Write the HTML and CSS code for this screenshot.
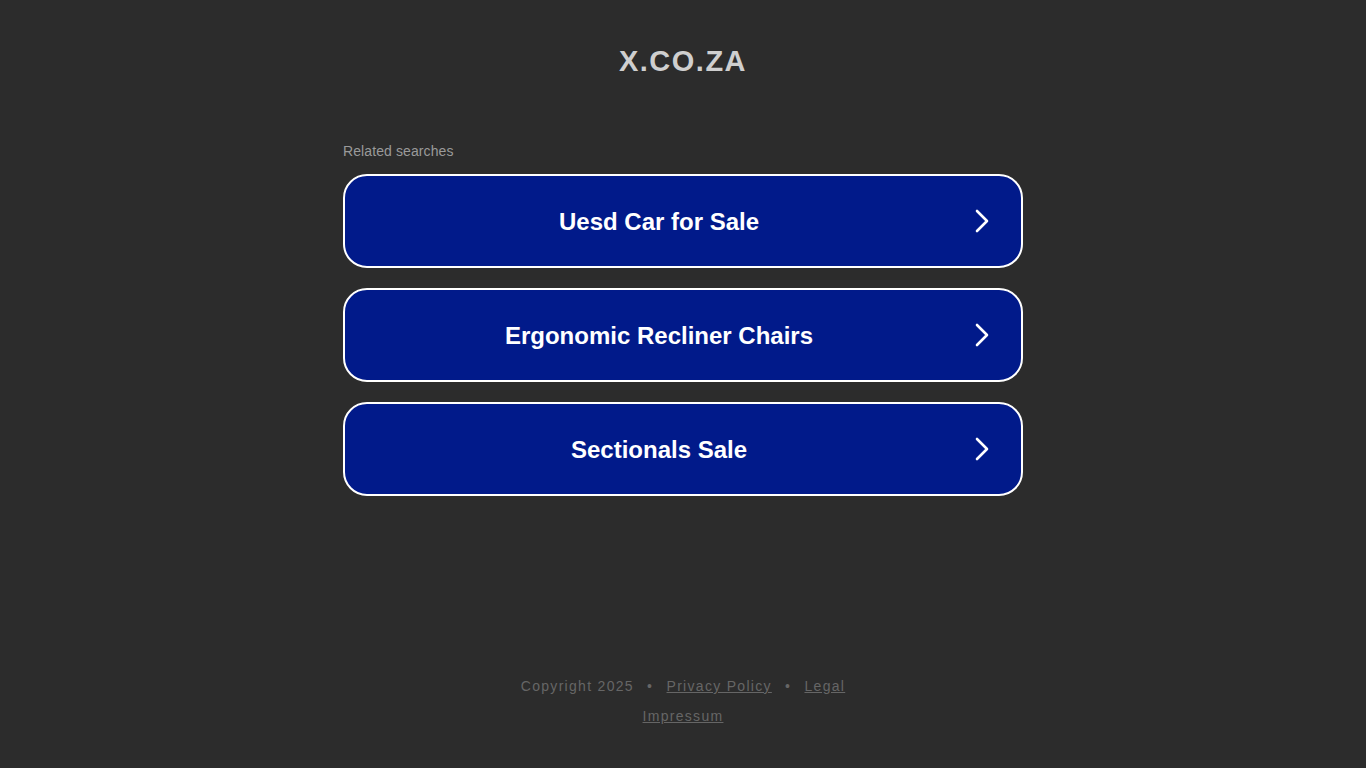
FILE: index.html
```html
<!DOCTYPE html>
<html lang="en">
<head>
    <meta charset="UTF-8">
    <meta name="viewport" content="width=device-width, initial-scale=1.0">
    <title>x.co.za</title>
    <link rel="stylesheet" href="styles.css">
</head>
<body>
    <div class="page">
        <h1 class="domain">X.CO.ZA</h1>

        <div class="related">
            <p class="related-title">Related searches</p>
            <a class="search-link" href="#">
                <span class="search-text">Uesd Car for Sale</span>
                <svg class="chevron" width="14" height="24" viewBox="0 0 14 24"><polyline points="2,2 12,12 2,22" fill="none" stroke="#fff" stroke-width="2.6" stroke-linecap="round" stroke-linejoin="round"/></svg>
            </a>
            <a class="search-link" href="#">
                <span class="search-text">Ergonomic Recliner Chairs</span>
                <svg class="chevron" width="14" height="24" viewBox="0 0 14 24"><polyline points="2,2 12,12 2,22" fill="none" stroke="#fff" stroke-width="2.6" stroke-linecap="round" stroke-linejoin="round"/></svg>
            </a>
            <a class="search-link" href="#">
                <span class="search-text">Sectionals Sale</span>
                <svg class="chevron" width="14" height="24" viewBox="0 0 14 24"><polyline points="2,2 12,12 2,22" fill="none" stroke="#fff" stroke-width="2.6" stroke-linecap="round" stroke-linejoin="round"/></svg>
            </a>
        </div>

        <div class="footer">
            <div class="footer-line">
                <span>Copyright 2025</span>
                <span class="dot">•</span>
                <a href="#">Privacy Policy</a>
                <span class="dot">•</span>
                <a href="#">Legal</a>
            </div>
            <div class="footer-line">
                <a href="#">Impressum</a>
            </div>
        </div>
    </div>
</body>
</html>
```

FILE: styles.css
```css
body {
    margin: 0;
    background-color: #2c2c2c;
    font-family: Arial, "Liberation Sans", sans-serif;
}
.page {
    min-height: 100vh;
    display: flex;
    flex-direction: column;
    align-items: center;
    box-sizing: border-box;
    padding-bottom: 37px;
}
.domain {
    margin: 0;
    padding-top: 44px;
    font-size: 29px;
    line-height: 34px;
    font-weight: bold;
    letter-spacing: 1.5px;
    color: #cfcfcf;
    text-align: center;
}
.related {
    width: 680px;
    margin-top: 63px;
    display: flex;
    flex-direction: column;
    gap: 20px;
}
.related-title {
    margin: 0 0 -7px;
    font-size: 14px;
    line-height: 20px;
    letter-spacing: 0.1px;
    color: #9a9a9a;
}
.search-link {
    height: 94px;
    box-sizing: border-box;
    display: flex;
    align-items: center;
    padding: 2px 32px 0 18px;
    background-color: #011a8a;
    border: 2px solid #fff;
    border-radius: 24px;
    color: #fff;
    text-decoration: none;
}
.search-text {
    flex: 1;
    text-align: center;
    font-size: 24px;
    font-weight: bold;
}
.chevron {
    display: block;
    margin-left: 20px;
    margin-top: -2px;
}
.footer {
    margin-top: auto;
    text-align: center;
    font-size: 14px;
    letter-spacing: 1.3px;
    color: #666;
}
.footer-line {
    line-height: 30px;
}
.footer a {
    color: #666;
}
.dot {
    margin: 0 8px;
}
```
